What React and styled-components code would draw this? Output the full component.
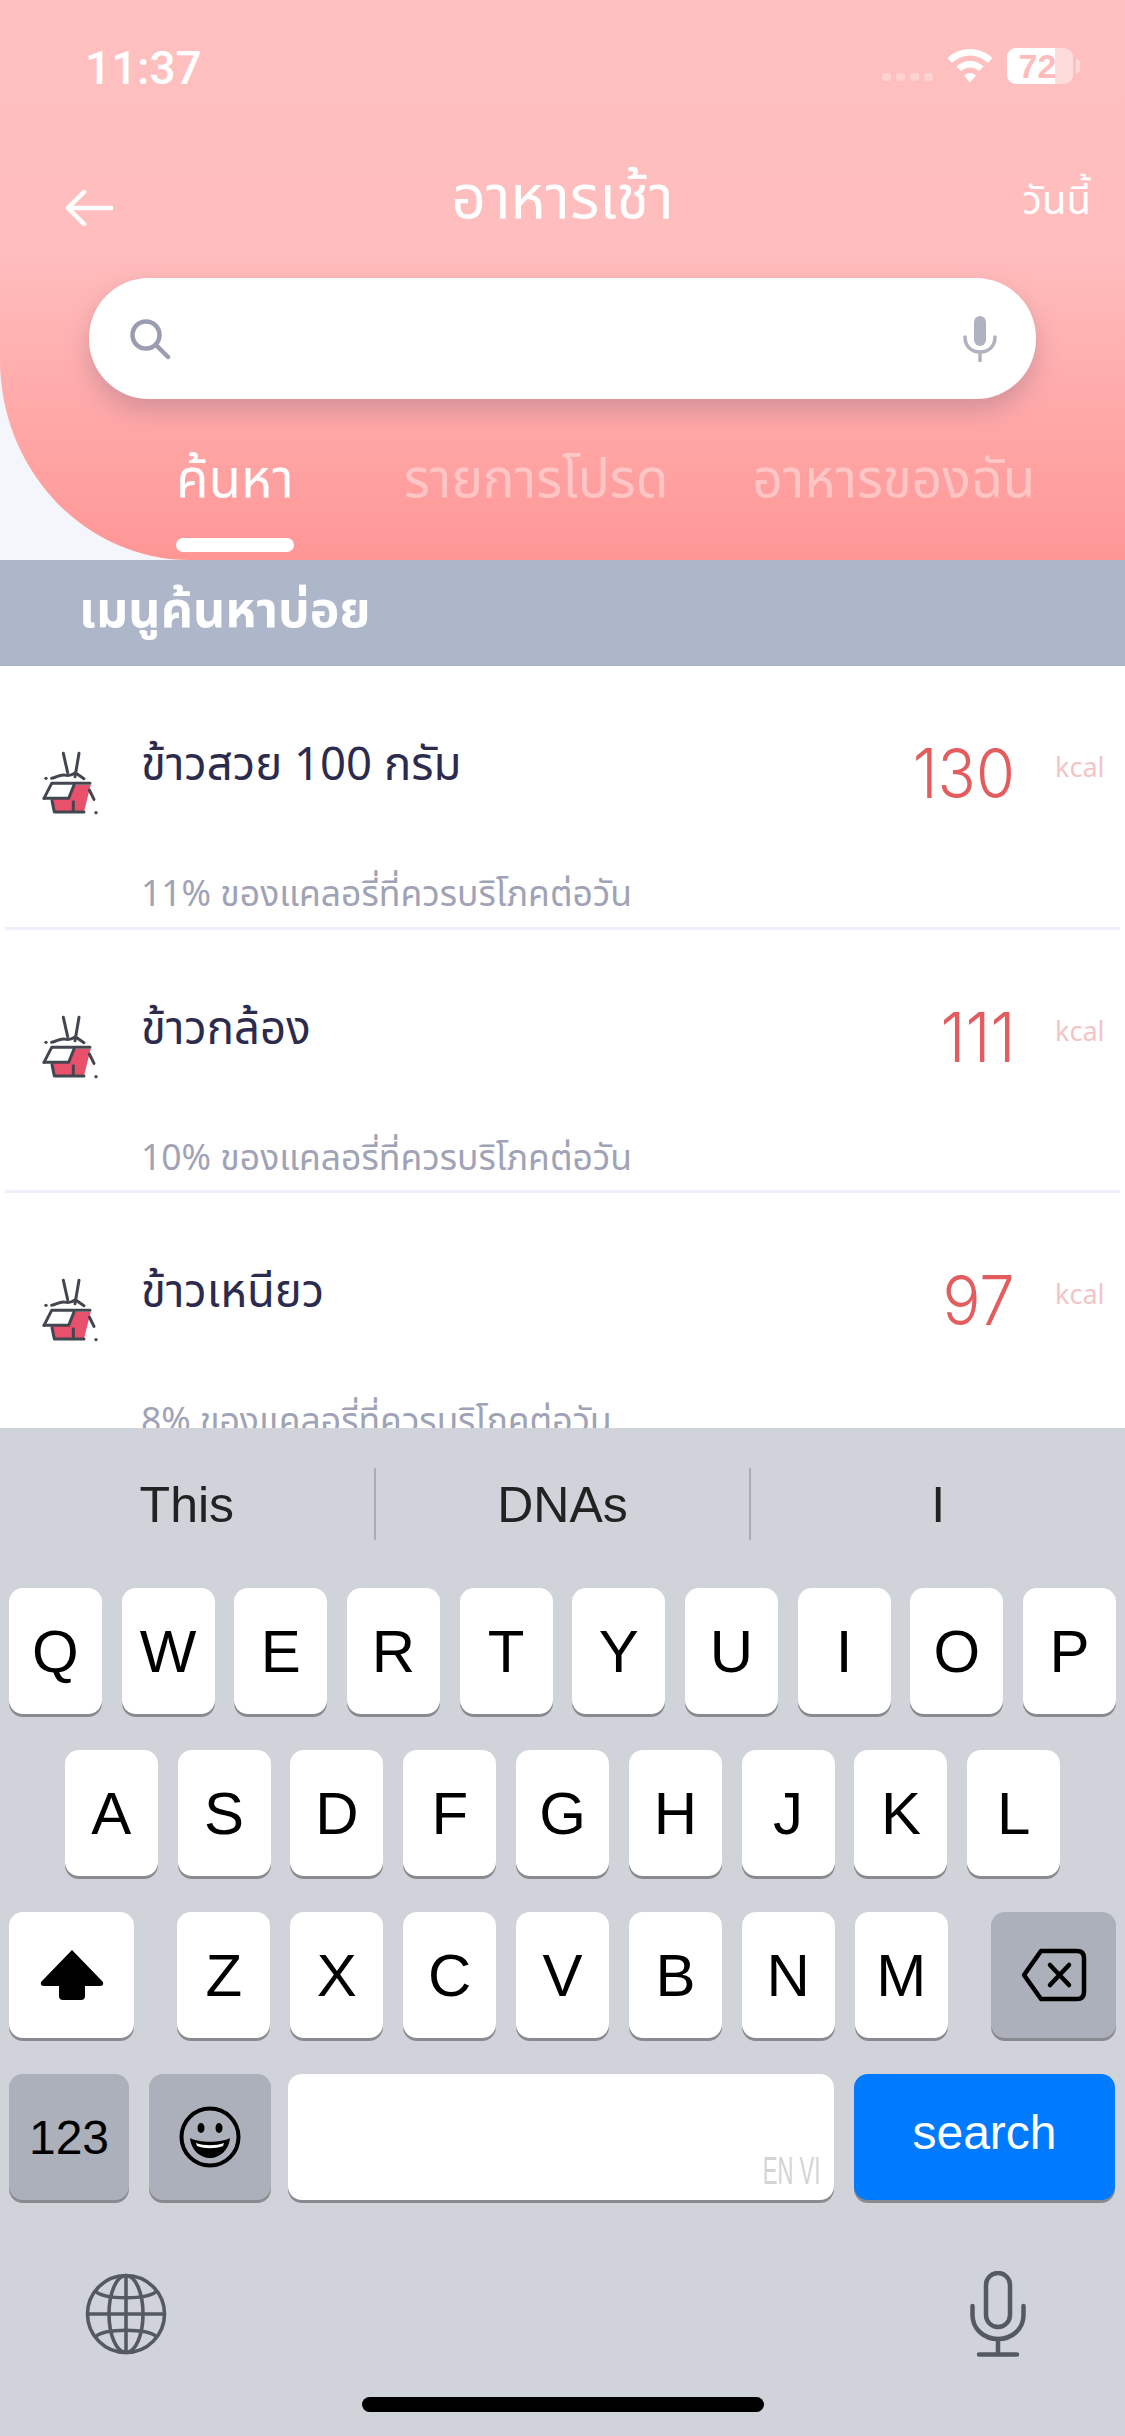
import React from 'react'
import styled, { createGlobalStyle } from 'styled-components'

const GlobalStyle = createGlobalStyle`
  html, body {
    margin: 0;
    padding: 0;
    background: #fff;
  }
  * {
    box-sizing: border-box;
  }
`

const FOODS = [
  { name: 'ข้าวสวย 100 กรัม', cal: 130, note: '11% ของแคลอรี่ที่ควรบริโภคต่อวัน' },
  { name: 'ข้าวกล้อง', cal: 111, note: '10% ของแคลอรี่ที่ควรบริโภคต่อวัน' },
  { name: 'ข้าวเหนียว', cal: 97, note: '8% ของแคลอรี่ที่ควรบริโภคต่อวัน' }
]

const FoodIcon = () => (
  <svg width="100" height="100" viewBox="0 0 300 300" fill="none">
    <path d="M96 207 L103 246 H192 L212 165 H165 L148 207 Z" fill="#e9506b" />
    <g stroke="#42464f" strokeWidth="9" strokeLinecap="round" strokeLinejoin="round">
      <path d="M130 70 L143 128" />
      <path d="M177 70 L165 140" />
      <path d="M95 145 C110 143 120 130 140 136 C150 138 160 132 166 128 L192 146" />
      <path d="M72 205 L95 160 H210" />
      <path d="M72 205 H146 L162 165" />
      <path d="M96 212 L103 246 H192" />
      <path d="M160 215 V244" />
      <path d="M208 180 L222 208" />
    </g>
    <circle cx="78" cy="145" r="5" fill="#42464f" />
    <circle cx="228" cy="248" r="5" fill="#42464f" />
  </svg>
)

const SearchIcon = () => (
  <svg width="42" height="42" viewBox="0 0 42 42" fill="none" stroke="#9a9cb0" strokeWidth="4.5" strokeLinecap="round">
    <circle cx="17" cy="17" r="13.5" />
    <path d="M27 27 L39 39" />
  </svg>
)

const SmallMic = () => (
  <svg width="34" height="46" viewBox="0 0 34 46" fill="none">
    <rect x="11" y="0" width="12" height="30" rx="6" fill="#b0b2c0" />
    <path d="M2 21 C2 31 9 36 17 36 C25 36 32 31 32 21 M17 36 V46" stroke="#b0b2c0" strokeWidth="3.5" strokeLinecap="round" />
  </svg>
)

const BackArrow = () => (
  <svg width="48" height="36" viewBox="0 0 48 36" fill="none" stroke="#fff" strokeWidth="4.5" strokeLinecap="round" strokeLinejoin="round">
    <path d="M46 18 H3 M19 2 L3 18 L19 34" />
  </svg>
)

const Wifi = () => (
  <svg width="46" height="34" viewBox="0 0 46 34" fill="#fff">
    <path d="M23 0 C14 0 6.500 3.500 0.500 9 L5 14 C10 9.500 16 6.500 23 6.500 C30 6.500 36 9.500 41 14 L45.500 9 C39.500 3.500 32 0 23 0 Z" />
    <path d="M23 12 C17.500 12 13 14 9.500 17.500 L14 22 C16.500 20 19.500 18.500 23 18.500 C26.500 18.500 29.500 20 32 22 L36.500 17.500 C33 14 28.500 12 23 12 Z" />
    <path d="M23 24 C20.500 24 18.500 25 17 26.500 L23 33.500 L29 26.500 C27.500 25 25.500 24 23 24 Z" />
  </svg>
)

const ShiftIcon = () => (
  <svg width="66" height="50" viewBox="0 0 66 50">
    <path d="M33 0 L64 32 Q65 36 61 36 H46 V46 Q46 50 42 50 H24 Q20 50 20 46 V36 H5 Q1 36 2 32 Z" fill="#000" />
  </svg>
)

const DeleteIcon = () => (
  <svg width="66" height="54" viewBox="0 0 66 54" fill="none" stroke="#000" strokeWidth="4.500" strokeLinecap="round" strokeLinejoin="round">
    <path d="M20 3 H56 Q63 3 63 10 V44 Q63 51 56 51 H20 L3 27 Z" />
    <path d="M29 17 L48 37 M48 17 L29 37" />
  </svg>
)

const EmojiIcon = () => (
  <svg width="62" height="62" viewBox="0 0 62 62" fill="none">
    <circle cx="31" cy="31" r="28.500" stroke="#000" strokeWidth="4" />
    <ellipse cx="22" cy="22" rx="3.500" ry="5" fill="#000" />
    <ellipse cx="40" cy="22" rx="3.500" ry="5" fill="#000" />
    <path d="M11 32 C20 37 42 37 51 32 C50 44 41 52 31 52 C21 52 12 44 11 32 Z" fill="#000" />
    <path d="M17 37 C25 40 37 40 45 37 L44 40 C36 43 26 43 18 40 Z" fill="#fff" />
  </svg>
)

const GlobeIcon = () => (
  <svg width="82" height="82" viewBox="0 0 82 82" fill="none" stroke="#555a60" strokeWidth="3.600">
    <circle cx="41" cy="41" r="38.500" />
    <ellipse cx="41" cy="41" rx="17" ry="38.500" />
    <path d="M41 2.500 V79.500 M2.500 41 H79.500" />
    <path d="M10 18 C20 27 62 27 72 18 M10 64 C20 55 62 55 72 64" />
  </svg>
)

const KeyboardMic = () => (
  <svg width="56" height="86" viewBox="0 0 56 86" fill="none" stroke="#555a60" strokeWidth="4.500" strokeLinecap="round">
    <rect x="16" y="2" width="24" height="54" rx="12" />
    <path d="M2.500 35 V44 C2.500 58 14 68 28 68 C42 68 53.500 58 53.500 44 V35" />
    <path d="M28 68 V83 M9 83.500 H47" />
  </svg>
)

const App = () => (
  <Screen>
    <GlobalStyle />
    <HeaderBackdrop>
      <Header>
        <StatusBar>
          <Time>11:37</Time>
          <StatusIcons>
            <SignalDots>
              <Dot /><Dot /><Dot /><Dot />
            </SignalDots>
            <Wifi />
            <Battery>
              <BatteryFill />
              <BatteryLevel>72</BatteryLevel>
            </Battery>
            <BatteryNub />
          </StatusIcons>
        </StatusBar>
        <NavRow>
          <BackButton><BackArrow /></BackButton>
          <Title>อาหารเช้า</Title>
          <TodayLink>วันนี้</TodayLink>
        </NavRow>
        <SearchBox>
          <SearchIcon />
          <SmallMic />
        </SearchBox>
        <Tabs>
          <Tab $active>ค้นหา</Tab>
          <Tab $offset={110}>รายการโปรด</Tab>
          <Tab $offset={84}>อาหารของฉัน</Tab>
        </Tabs>
      </Header>
    </HeaderBackdrop>
    <SectionBar>เมนูค้นหาบ่อย</SectionBar>
    <FoodList>
      {FOODS.map(food => (
        <FoodRow key={food.name}>
          <FoodIconWrap><FoodIcon /></FoodIconWrap>
          <FoodText>
            <FoodName>{food.name}</FoodName>
            <FoodNote>{food.note}</FoodNote>
          </FoodText>
          <Calories>{food.cal}</Calories>
          <Unit>kcal</Unit>
        </FoodRow>
      ))}
    </FoodList>
    <Keyboard>
      <Suggestions>
        <Suggestion>This</Suggestion>
        <Suggestion>DNAs</Suggestion>
        <Suggestion>I</Suggestion>
      </Suggestions>
      <KeyRows>
        <KeyRow>
          {'QWERTYUIOP'.split('').map(k => <Key key={k}>{k}</Key>)}
        </KeyRow>
        <KeyRow $center>
          {'ASDFGHJKL'.split('').map(k => <Key key={k}>{k}</Key>)}
        </KeyRow>
        <KeyRow>
          <Key $width={125}><ShiftIcon /></Key>
          <LetterGroup>
            {'ZXCVBNM'.split('').map(k => <Key key={k}>{k}</Key>)}
          </LetterGroup>
          <Key $width={125} $dark><DeleteIcon /></Key>
        </KeyRow>
        <BottomRow>
          <Key $width={120} $dark $small>123</Key>
          <Key $width={122} $dark><EmojiIcon /></Key>
          <SpaceKey><SpaceLabel>EN VI</SpaceLabel></SpaceKey>
          <SearchKey>search</SearchKey>
        </BottomRow>
      </KeyRows>
      <KeyboardFooter>
        <GlobeIcon />
        <KeyboardMic />
      </KeyboardFooter>
      <HomeBarRow><HomeBar /></HomeBarRow>
    </Keyboard>
  </Screen>
)

export default App

const THAI = `'Noto Sans Thai', 'Noto Sans', 'Open Sans', sans-serif`
const LATIN = `'Liberation Sans', Arial, sans-serif`

const Screen = styled.div`
  width: 1125px;
  height: 2436px;
  display: flex;
  flex-direction: column;
  overflow: hidden;
  background: #fff;
  font-family: ${THAI};
`

const HeaderBackdrop = styled.div`
  background: #f5f6fb;
  height: 560px;
  flex: none;
`

const Header = styled.header`
  height: 560px;
  background: linear-gradient(180deg, #ffc0c0 0%, #ffbdbd 45%, #ff9696 100%);
  border-bottom-left-radius: 190px 200px;
  color: #fff;
`

const StatusBar = styled.div`
  height: 136px;
  display: flex;
  justify-content: space-between;
  padding: 46px 45px 0 85px;
`

const Time = styled.span`
  font-family: Roboto, ${LATIN};
  font-weight: 500;
  font-size: 46px;
  line-height: 44px;
  color: #fff;
`

const StatusIcons = styled.div`
  display: flex;
  align-items: center;
  height: 40px;
`

const SignalDots = styled.div`
  display: flex;
  gap: 5px;
  margin: 22px 14px 0 0;
`

const Dot = styled.i`
  width: 9px;
  height: 8px;
  border-radius: 3px;
  background: rgba(255, 255, 255, 0.3);
`

const Battery = styled.div`
  position: relative;
  width: 66px;
  height: 36px;
  margin-left: 14px;
  border-radius: 9px;
  overflow: hidden;
  background: rgba(255, 255, 255, 0.45);
`

const BatteryFill = styled.div`
  width: 48px;
  height: 100%;
  background: #fff;
`

const BatteryLevel = styled.span`
  position: absolute;
  inset: 0 5px 0 0;
  text-align: center;
  font-family: ${LATIN};
  font-weight: 700;
  font-size: 34px;
  line-height: 36px;
  color: #ffbcbc;
`

const BatteryNub = styled.i`
  width: 4px;
  height: 14px;
  margin-left: 3px;
  border-radius: 0 4px 4px 0;
  background: rgba(255, 255, 255, 0.45);
`

const NavRow = styled.div`
  height: 118px;
  padding-top: 8px;
  display: grid;
  grid-template-columns: 1fr auto 1fr;
  align-items: center;
`

const BackButton = styled.div`
  margin: 18px 0 0 65px;
  line-height: 0;
`

const Title = styled.h1`
  margin: 0;
  font-size: 60px;
  font-weight: 400;
  color: #fff;
`

const TodayLink = styled.span`
  justify-self: end;
  margin: 6px 34px 0 0;
  font-size: 40px;
  color: #fff;
`

const SearchBox = styled.div`
  height: 121px;
  margin: 24px 89px 0;
  padding: 0 39px 0 40px;
  display: flex;
  justify-content: space-between;
  align-items: center;
  border-radius: 60px;
  background: #fff;
  box-shadow: 0 12px 24px rgba(150, 110, 130, 0.4);
`

const Tabs = styled.nav`
  display: flex;
  margin-top: 28px;
  padding-left: 176px;
`

const Tab = styled.span`
  display: flex;
  flex-direction: column;
  margin-left: ${props => props.$offset || 0}px;
  font-size: 53px;
  line-height: 108px;
  white-space: nowrap;
  color: ${props => (props.$active ? '#fff' : 'rgba(255, 255, 255, 0.4)')};

  &::after {
    content: '';
    display: ${props => (props.$active ? 'block' : 'none')};
    width: 118px;
    height: 14px;
    margin-top: 3px;
    border-radius: 7px;
    background: #fff;
  }
`

const SectionBar = styled.div`
  height: 106px;
  flex: none;
  padding-left: 79px;
  background: #aeb6c9;
  color: #fff;
  font-size: 50px;
  font-weight: 700;
  line-height: 104px;
`

const FoodList = styled.section`
  flex: 1;
  min-height: 0;
  overflow: hidden;
  background: #fff;
`

const FoodRow = styled.div`
  height: 263.5px;
  margin: 0 5px;
  padding: 0 13px 0 15px;
  display: flex;
  align-items: flex-start;
  border-bottom: 3px solid #eef0fb;
`

const FoodIconWrap = styled.div`
  width: 121px;
  padding-top: 64px;
  flex: none;
`

const FoodText = styled.div`
  flex: 1;
  padding-top: 69px;
`

const FoodName = styled.div`
  height: 135px;
  font-size: 45.500px;
  line-height: 62px;
  color: #2c2b4e;
`

const FoodNote = styled.div`
  font-size: 35.500px;
  line-height: 50px;
  color: #a0a3b5;
`

const Calories = styled.div`
  margin-top: 65px;
  font-family: Inter, ${THAI};
  font-weight: 300;
  font-size: 68px;
  line-height: 84px;
  color: #e35d5f;
  transform: scaleX(0.93);
  transform-origin: right center;
`

const Unit = styled.div`
  width: 52px;
  margin: 85px 0 0 40px;
  font-size: 27px;
  line-height: 36px;
  color: #f3c4c6;
`

const Keyboard = styled.div`
  height: 1008px;
  flex: none;
  background: #d0d3da;
  font-family: ${LATIN};
`

const Suggestions = styled.div`
  height: 160px;
  padding-top: 40px;
  display: flex;
`

const Suggestion = styled.div`
  flex: 1;
  height: 72px;
  font-size: 50px;
  line-height: 74px;
  text-align: center;
  color: #222;
  & + & {
    border-left: 2px solid #a9acb3;
  }
`

const KeyRows = styled.div`
  padding: 0 9px;
  display: flex;
  flex-direction: column;
  gap: 36px;
`

const KeyRow = styled.div`
  display: flex;
  justify-content: ${props => (props.$center ? 'center' : 'space-between')};
  gap: 19.800px;
`

const LetterGroup = styled.div`
  display: flex;
  gap: 19.900px;
`

const BottomRow = styled.div`
  display: flex;
  gap: 20px;
`

const Key = styled.div`
  width: ${props => props.$width || 93}px;
  height: 126px;
  display: flex;
  align-items: center;
  justify-content: center;
  border-radius: 14px;
  background: ${props => (props.$dark ? '#abb0ba' : '#fff')};
  box-shadow: 0 3px 0 #898a8f;
  color: #000;
  font-size: ${props => (props.$small ? 48 : 60)}px;
`

const SpaceKey = styled.div`
  width: 546px;
  height: 126px;
  margin-left: -3px;
  padding: 0 14px 10px 0;
  display: flex;
  align-items: flex-end;
  justify-content: flex-end;
  border-radius: 14px;
  background: #fff;
  box-shadow: 0 3px 0 #898a8f;
`

const SpaceLabel = styled.span`
  display: inline-block;
  font-size: 38px;
  line-height: 38px;
  color: #d4d4d4;
  transform: scaleX(0.58);
  transform-origin: right center;
`

const SearchKey = styled.div`
  width: 261px;
  height: 126px;
  border-radius: 14px;
  background: #007aff;
  box-shadow: 0 3px 0 #898a8f;
  color: #fff;
  font-size: 48px;
  line-height: 118px;
  text-align: center;
`

const KeyboardFooter = styled.div`
  height: 110px;
  margin-top: 59px;
  padding: 0 99px 0 85px;
  display: flex;
  justify-content: space-between;
  align-items: center;
`

const HomeBarRow = styled.div`
  margin-top: 28px;
  display: flex;
  justify-content: center;
`

const HomeBar = styled.div`
  width: 402px;
  height: 15px;
  border-radius: 8px;
  background: #000;
`
